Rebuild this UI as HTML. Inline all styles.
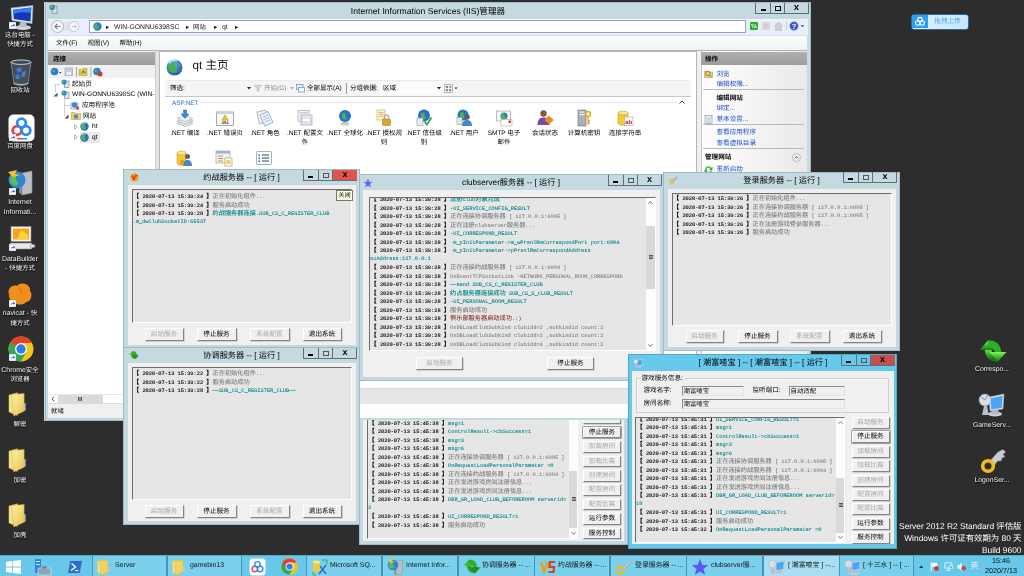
<!DOCTYPE html>
<html lang="zh"><head><meta charset="utf-8"><title>desktop</title>
<style>
*{box-sizing:border-box;margin:0;padding:0}
html,body{width:1024px;height:576px;overflow:hidden;background:#2d2d2d}
body{position:relative;-webkit-font-smoothing:antialiased;text-rendering:geometricPrecision;font-family:"Liberation Sans","Noto Sans CJK SC",sans-serif;font-size:7px;color:#000}
.abs{position:absolute}
div,span,svg{position:absolute}
span,i,b{position:static}
i,b{font-style:normal;font-weight:normal}
/* desktop icons */
.dlabel{color:#fff;font-size:6.9px;text-align:center;width:60px;line-height:9.2px;text-shadow:0 0 1px #000,0.5px 0.5px 1px #000;white-space:nowrap}
/* windows */
.win{background:#c4d9e0;box-shadow:inset 0 0 0 1px #a3bac3}
.win.act{background:#66c9eb;box-shadow:inset 0 0 0 1px #4fa9cd}
.title{font-size:8.2px;text-align:center;white-space:nowrap;color:#000;line-height:12px}
.cbtns{height:11px;border:1px solid #5f6f78;border-top:none;display:block}
.cbtns>div{top:0;height:10px;border-left:1px solid #5f6f78}
.cbtns>div:first-child{border-left:none}
.client{background:#f0f0f0}
.logbox{background:#e6e6e6;border-top:1px solid #6d6d6d;border-left:1px solid #6d6d6d;border-right:1px solid #fff;border-bottom:1px solid #fff;overflow:hidden}
.ll{font-family:"Liberation Mono","Noto Sans CJK SC",monospace;font-size:5.33px;line-height:8.5px;white-space:nowrap;color:#000;height:8.5px}
.ll i{font-family:"Noto Sans CJK SC",sans-serif;font-size:6.2px}
.ll b{color:#000;-webkit-text-stroke:0.12px #000}
.ll b i{font-weight:900}
.ll .g{color:#7a7a7a;-webkit-text-stroke:0.06px #7a7a7a}
.ll .t{color:#088;-webkit-text-stroke:0.1px #088}
.ll .r{color:#7a1010;}
.btn{background:#f0f0f0;border:1px solid #fff;border-right-color:#858585;border-bottom-color:#858585;font-size:6.6px;text-align:center;white-space:nowrap;color:#000;box-shadow:0.5px 0.5px 0 #b0b0b0}
.btn.dis{color:#a8a8a8}
.sb{background:#fcfcfc}
.sb .thumb{background:#d9d9d9}
.dlabel i,.dlabel.c{font-size:6.4px}
.btn.def{box-shadow:0 0 0 0.6px #707070}

</style></head>
<body>
<div id="root" style="left:0;top:0;width:1024px;height:576px;will-change:transform">
<div id="desktop" style="left:0;top:0;width:1024px;height:576px;background:#2d2d2d"></div>
<svg style="left:8px;top:5px" width="26" height="26" viewBox="0 0 26 26"><ellipse cx="15" cy="22.500" rx="8" ry="2.500" fill="#cfd5db"/><path d="M12 17 L18 17 L19 22 L11 22Z" fill="#b9c0c8"/><path d="M3 3 L25 0.500 L24 18.500 L4 15.500Z" fill="#e3e9f0" stroke="#9aa5b0" stroke-width=".6"/><path d="M5 4.800 L23.300 2.600 L22.500 16.600 L5.800 14Z" fill="#1238b8"/><path d="M5 4.800 L23.300 2.600 L23 8 C16 6.500 10 7 5.400 9.500Z" fill="#2f7ff0"/></svg>
<svg style="left:9px;top:22px" width="7" height="7" viewBox="0 0 6 6"><rect width="6" height="6" fill="#fff" stroke="#9ab" stroke-width=".5"/><path d="M1.3 4.8 C1.5 3 2.6 2.3 3.8 2.3 L3.8 1.2 L5.2 2.8 L3.8 4.3 L3.8 3.3 C2.8 3.3 2 3.6 1.3 4.8Z" fill="#2a5fc0"/></svg>
<div class="dlabel" style="left:-10px;top:31px"><i>这台电脑</i> -<br><i>快捷方式</i></div>
<svg style="left:9px;top:59px" width="24" height="27" viewBox="0 0 24 27"><path d="M2 3 L22 3 L19 25 C15 27 9 27 5 25Z" fill="#5f6f7c" fill-opacity=".5" stroke="#8f9da8" stroke-width=".7"/><ellipse cx="12" cy="3.2" rx="10" ry="2.2" fill="#3d4a56" stroke="#d5dee6" stroke-width=".9"/><path d="M7 10 L12 8 L13 12 L9 14Z M13 13 L17 12 L16 18 L12 18Z M6 16 L10 15 L11 20 L7 20Z" fill="#3f86e8" fill-opacity=".85"/><path d="M5 24 C9 26 15 26 19 24" stroke="#b9c6d0" stroke-width="1" fill="none"/></svg>
<div class="dlabel" style="left:-10px;top:86px"><i>回收站</i></div>
<svg style="left:8px;top:114px" width="27" height="28" viewBox="0 0 27 28"><rect x="0.5" y="0.5" width="26" height="27" rx="5" fill="#fff"/><circle cx="9" cy="16.500" r="4.300" fill="none" stroke="#e8453c" stroke-width="2.800"/><circle cx="18" cy="16.500" r="4.300" fill="none" stroke="#2f8cf0" stroke-width="2.800"/><circle cx="13.500" cy="9" r="4.300" fill="none" stroke="#2f8cf0" stroke-width="2.800"/><rect x="9" y="24" width="5" height="1.500" fill="#e8453c"/><rect x="14" y="24" width="5" height="1.500" fill="#2f8cf0"/></svg>
<svg style="left:9px;top:134px" width="7" height="7" viewBox="0 0 6 6"><rect width="6" height="6" fill="#fff" stroke="#9ab" stroke-width=".5"/><path d="M1.3 4.8 C1.5 3 2.6 2.3 3.8 2.3 L3.8 1.2 L5.2 2.8 L3.8 4.3 L3.8 3.3 C2.8 3.3 2 3.6 1.3 4.8Z" fill="#2a5fc0"/></svg>
<div class="dlabel" style="left:-10px;top:142px"><i>百度网盘</i></div>
<svg style="left:7px;top:169px" width="28" height="28" viewBox="0 0 28 28"><path d="M15 4 L25 2 L25 24 L15 26Z" fill="#b9bec4" stroke="#868d95" stroke-width=".6"/><path d="M12 5 L15 4 L15 26 L12 24Z" fill="#7d848c"/><circle cx="10" cy="11" r="8.5" fill="#2e86d9"/><path d="M4 7 C7 4 10 6 9 9 C8 12 12 12 11 15 C9 18 5 16 3 13Z" fill="#5cc04a"/><path d="M1 3 L10 1 L8 5 L13 6 L6 8Z" fill="#f3c52a"/></svg>
<svg style="left:9px;top:188px" width="7" height="7" viewBox="0 0 6 6"><rect width="6" height="6" fill="#fff" stroke="#9ab" stroke-width=".5"/><path d="M1.3 4.8 C1.5 3 2.6 2.3 3.8 2.3 L3.8 1.2 L5.2 2.8 L3.8 4.3 L3.8 3.3 C2.8 3.3 2 3.6 1.3 4.8Z" fill="#2a5fc0"/></svg>
<div class="dlabel" style="left:-10px;top:198.400px">Internet<br>Informati...</div>
<svg style="left:8px;top:226px" width="28" height="26" viewBox="0 0 28 26"><rect x="3" y="0.5" width="20" height="15" fill="#f4f4f4" stroke="#8a8a8a" stroke-width=".6"/><rect x="5" y="2.5" width="16" height="11" fill="#f7a31c"/><path d="M9 13.5 L13 4 L19 8 L21 13.5Z" fill="#fbd43a"/><rect x="2" y="17" width="22" height="6" rx="1" fill="#e9e9e9" stroke="#8a8a8a" stroke-width=".6"/><rect x="22" y="18.5" width="5" height="3" rx="1.5" fill="#ddd" stroke="#8a8a8a" stroke-width=".5"/></svg>
<svg style="left:9px;top:244px" width="7" height="7" viewBox="0 0 6 6"><rect width="6" height="6" fill="#fff" stroke="#9ab" stroke-width=".5"/><path d="M1.3 4.8 C1.5 3 2.6 2.3 3.8 2.3 L3.8 1.2 L5.2 2.8 L3.8 4.3 L3.8 3.3 C2.8 3.3 2 3.6 1.3 4.8Z" fill="#2a5fc0"/></svg>
<div class="dlabel" style="left:-10px;top:254.500px">DataBuilder<br>- <i>快捷方式</i></div>
<svg style="left:7px;top:282px" width="26" height="24" viewBox="0 0 26 24"><path d="M2 13 C0 7 5 2 10 4 C14 -1 24 2 23 9 C26 12 24 20 19 20 C16 24 7 23 6 19 C3 19 2 16 2 13Z" fill="#f0901c"/><path d="M11 5 C14 7 15 9 14 12" stroke="#c86c0c" stroke-width=".8" fill="none"/></svg>
<svg style="left:9px;top:300px" width="7" height="7" viewBox="0 0 6 6"><rect width="6" height="6" fill="#fff" stroke="#9ab" stroke-width=".5"/><path d="M1.3 4.8 C1.5 3 2.6 2.3 3.8 2.3 L3.8 1.2 L5.2 2.8 L3.8 4.3 L3.8 3.3 C2.8 3.3 2 3.6 1.3 4.8Z" fill="#2a5fc0"/></svg>
<div class="dlabel" style="left:-10px;top:309.400px">navicat - <i>快</i><br><i>捷方式</i></div>
<svg style="left:8px;top:336px" width="26" height="26" viewBox="0 0 26 26"><circle cx="13" cy="13" r="12.5" fill="#f6c51d"/><path d="M13 13 L2.2 6.8 A12.5 12.5 0 0 1 23.8 6.8 L13 6.8Z" fill="#e3412f"/><path d="M13 13 L2.2 6.8 A12.5 12.5 0 0 0 13 25.5 L18.5 16Z" fill="#37a84f"/><path d="M2.2 6.8 A12.5 12.5 0 0 1 23.8 6.8 L13 6.8Z" fill="#e3412f"/><circle cx="13" cy="13" r="6" fill="#fff"/><circle cx="13" cy="13" r="4.7" fill="#2f7de8"/></svg>
<svg style="left:9px;top:354px" width="7" height="7" viewBox="0 0 6 6"><rect width="6" height="6" fill="#fff" stroke="#9ab" stroke-width=".5"/><path d="M1.3 4.8 C1.5 3 2.6 2.3 3.8 2.3 L3.8 1.2 L5.2 2.8 L3.8 4.3 L3.8 3.3 C2.8 3.3 2 3.6 1.3 4.8Z" fill="#2a5fc0"/></svg>
<div class="dlabel" style="left:-10px;top:365.500px">Chrome<i>安全</i><br><i>浏览器</i></div>
<svg style="left:8px;top:392px" width="19" height="25" viewBox="0 0 20 26"><defs><linearGradient id="fg0" x1="0" y1="0" x2="1" y2="1"><stop offset="0" stop-color="#fdf1a8"/><stop offset="1" stop-color="#e9c24f"/></linearGradient></defs><path d="M1 3 L10 0.5 L10 24.5 L1 21 Z" fill="#f7e38c" stroke="#d9b64a" stroke-width=".5"/><path d="M4 2.5 L17 1.5 L17 20 L6 25 Z" fill="url(#fg0)" stroke="#d2ab3e" stroke-width=".5"/><path d="M17 12 L18.5 11.5 L18.5 19 L17 20Z" fill="#c9c9c9"/></svg>
<div class="dlabel" style="left:-10px;top:420px"><i>解密</i></div>
<svg style="left:8px;top:448px" width="19" height="25" viewBox="0 0 20 26"><defs><linearGradient id="fg1" x1="0" y1="0" x2="1" y2="1"><stop offset="0" stop-color="#fdf1a8"/><stop offset="1" stop-color="#e9c24f"/></linearGradient></defs><path d="M1 3 L10 0.5 L10 24.5 L1 21 Z" fill="#f7e38c" stroke="#d9b64a" stroke-width=".5"/><path d="M4 2.5 L17 1.5 L17 20 L6 25 Z" fill="url(#fg1)" stroke="#d2ab3e" stroke-width=".5"/><path d="M17 12 L18.5 11.5 L18.5 19 L17 20Z" fill="#c9c9c9"/></svg>
<div class="dlabel" style="left:-10px;top:476px"><i>加密</i></div>
<svg style="left:8px;top:503px" width="19" height="25" viewBox="0 0 20 26"><defs><linearGradient id="fg2" x1="0" y1="0" x2="1" y2="1"><stop offset="0" stop-color="#fdf1a8"/><stop offset="1" stop-color="#e9c24f"/></linearGradient></defs><path d="M1 3 L10 0.5 L10 24.5 L1 21 Z" fill="#f7e38c" stroke="#d9b64a" stroke-width=".5"/><path d="M4 2.5 L17 1.5 L17 20 L6 25 Z" fill="url(#fg2)" stroke="#d2ab3e" stroke-width=".5"/><path d="M17 12 L18.5 11.5 L18.5 19 L17 20Z" fill="#c9c9c9"/></svg>
<div class="dlabel" style="left:-10px;top:531px"><i>加壳</i></div>
<svg style="left:979px;top:340px" width="28" height="22" viewBox="0 0 28 22"><defs><linearGradient id="gr1" x1="0" y1="0" x2="0" y2="1"><stop offset="0" stop-color="#8cf05a"/><stop offset=".5" stop-color="#3cc02c"/><stop offset="1" stop-color="#157a15"/></linearGradient></defs><path d="M9 8 C9 15 12.500 18.500 19 18.500" stroke="url(#gr1)" stroke-width="6.500" fill="none"/><path d="M0.500 10 L9 0.500 L17.500 10Z" fill="url(#gr1)"/><path d="M19 14 C19 7 15.500 3.500 9 3.500" stroke="#2fae26" stroke-width="6.500" fill="none"/><path d="M10.500 12 L19 21.500 L27.500 12Z" fill="url(#gr1)"/></svg>
<div class="dlabel" style="left:962px;top:365px">Correspo...</div>
<svg style="left:978px;top:391px" width="28" height="27" viewBox="0 0 28 27"><ellipse cx="17" cy="23" rx="7" ry="2.5" fill="#c9cfd6"/><path d="M14 17 L20 17 L21 23 L13 23Z" fill="#b4bbc3"/><path d="M11 6 L26 3 L25 18 L12 20Z" fill="#dbe3ec" stroke="#9aa5b0" stroke-width=".6"/><path d="M12.500 7.200 L24.600 4.800 L23.800 16.800 L13.300 18.400Z" fill="#4aa6f2"/><circle cx="7" cy="9" r="6" fill="#d9dde2" stroke="#9aa0a8" stroke-width=".6"/><path d="M3 6 L7 9 L10 4" stroke="#8a9098" stroke-width="1" fill="none"/><path d="M6 15 L9 15 L11 24 L4 24Z" fill="#b9bfc6"/></svg>
<div class="dlabel" style="left:962px;top:420.500px">GameServ...</div>
<svg style="left:980px;top:449px" width="26" height="25" viewBox="0 0 26 25"><path d="M10 12 L18 3 L23 0.500 L25.500 3 L23 5.500 L25 7.500 L22 9 L21 12 L17.500 12 L14 17Z" fill="#c9cdd1" stroke="#8d9297" stroke-width=".6"/><circle cx="8" cy="17" r="5.300" fill="none" stroke="#f2bd18" stroke-width="3.600"/></svg>
<div class="dlabel" style="left:962px;top:476px">LogonSer...</div>
<div style="left:911.500px;top:15px;width:56px;height:13.500px;border-radius:2px;background:linear-gradient(90deg,#e2f3ff,#c4e6ff);overflow:hidden;box-shadow:0 0 0 0.5px #38a4f8"><div style="left:0;top:0;width:16px;height:13px;background:#2b9ef5"></div><svg style="left:2px;top:1px" width="12" height="11" viewBox="0 0 12 11"><circle cx="3.800" cy="7" r="2.200" fill="none" stroke="#fff" stroke-width="1.100"/><circle cx="8.200" cy="7" r="2.200" fill="none" stroke="#fff" stroke-width="1.100"/><circle cx="6" cy="3.600" r="2.200" fill="none" stroke="#fff" stroke-width="1.100"/></svg><div style="left:16px;top:0;width:40px;height:13px;line-height:13px;font-size:6.6px;color:#4aa8f0;text-align:center">拖拽上传</div></div>
<div style="right:2.500px;top:521px;width:300px;text-align:right;color:#fff;font-size:8.400px;line-height:11.800px;white-space:nowrap">Server 2012 R2 Standard 评估版<br>Windows 许可证有效期为 80 天<br>Build 9600</div>
<div class="win" style="left:44px;top:2px;width:767px;height:419px;border-left:1px solid #c4d9e0">
<svg style="left:4px;top:2px" width="9" height="10" viewBox="0 0 9 10"><rect x="3" y="2" width="5" height="7.500" fill="#d8dde2" stroke="#6b7680" stroke-width=".6"/><circle cx="3.200" cy="3.200" r="2.800" fill="#2f86d8"/><path d="M1 2 C2 1 4 1.500 3.500 3 C3 4.500 1.500 4.500 1 3.500Z" fill="#5cc04a"/><path d="M0 .5 L4 0 L2.500 2Z" fill="#f0c22a"/></svg>
<div class="title" style="left:233px;top:2.500px;width:300px;font-size:8.600px">Internet Information Services (IIS)管理器</div>
<div class="cbtns" style="left:710px;top:0.500px;width:54px"><div style="left:0;width:13.500px"><div style="left:4.500px;top:6px;width:5px;height:2px;border:none;background:#000"></div></div><div style="left:13.500px;width:14px"><div style="left:4px;top:3.500px;width:6px;height:4.500px;border:1.300px solid #000"></div></div><div style="left:27.500px;width:25px;font-size:9.500px;font-weight:bold;line-height:9.500px;text-align:center;font-family:'Liberation Sans',sans-serif">x</div></div>
<div style="left:3px;top:16.500px;width:760px;height:17.500px;background:#e9eefb;border-top:1px solid #f3f6fd;border-bottom:1px solid #d9deee"></div>
<div style="left:44px;top:18px;width:657px;height:13px;background:#fff;border:1px solid #9aa2b4"></div>
<svg style="left:5px;top:17px" width="30" height="15" viewBox="0 0 30 15"><rect x="6" y="3" width="18" height="9" fill="#dfe4ee"/><circle cx="7.500" cy="7.500" r="6" fill="#f4f6fa" stroke="#a3abba" stroke-width=".8"/><path d="M10.500 7.500 L5 7.500 M7.300 5 L4.800 7.500 L7.300 10" stroke="#7a8292" stroke-width="1.100" fill="none"/><circle cx="24" cy="7.500" r="5" fill="#f4f6fa" stroke="#b9c0cc" stroke-width=".8"/><path d="M21.500 7.500 L26.500 7.500 M24.500 5.500 L26.500 7.500 L24.500 9.500" stroke="#c3c8d2" stroke-width="1" fill="none"/></svg>
<svg style="left:48px;top:20px" width="9" height="9" viewBox="0 0 9 9"><circle cx="4.500" cy="4.500" r="4.200" fill="#2c7fd6"/><path d="M1.500 2.500 C3 1 5 2 4.500 3.500 C4 5 6 5 5.500 6.500 C4.500 8 2 7 1 5.500Z" fill="#4fb848"/></svg>
<div style="left:61px;top:18.600px;height:13px;line-height:13px;font-size:6.500px;white-space:nowrap;color:#1a1a1a">▸</div>
<div style="left:69px;top:18.600px;height:13px;line-height:13px;font-size:6.800px;white-space:nowrap;color:#1a1a1a">WIN-GONNU6398SC</div>
<div style="left:141px;top:18.600px;height:13px;line-height:13px;font-size:6.500px;white-space:nowrap;color:#1a1a1a">▸</div>
<div style="left:148px;top:18.600px;height:13px;line-height:13px;font-size:6.400px;white-space:nowrap;color:#1a1a1a">网站</div>
<div style="left:169px;top:18.600px;height:13px;line-height:13px;font-size:6.500px;white-space:nowrap;color:#1a1a1a">▸</div>
<div style="left:177px;top:18.600px;height:13px;line-height:13px;font-size:6.800px;white-space:nowrap;color:#1a1a1a">qt</div>
<div style="left:190px;top:18.600px;height:13px;line-height:13px;font-size:6.500px;white-space:nowrap;color:#1a1a1a">▸</div>
<svg style="left:705px;top:19.500px" width="8" height="8" viewBox="0 0 8 8"><rect width="8" height="8" rx="1" fill="#2faa32"/><path d="M1.500 3 L6 3 M2.500 1.800 L1.300 3 L2.500 4.200 M6.500 5 L2 5 M5.500 3.800 L6.700 5 L5.500 6.200" stroke="#eaffea" stroke-width=".8" fill="none"/></svg>
<svg style="left:717px;top:19.500px" width="8" height="8" viewBox="0 0 8 8"><rect width="8" height="8" rx="1" fill="#d6d8dc"/><path d="M2 2 L6 6 M6 2 L2 6" stroke="#c2c5ca" stroke-width="1"/></svg>
<svg style="left:729px;top:18.500px" width="9" height="10" viewBox="0 0 9 10"><path d="M0.500 5 L4.500 1 L8.500 5 L7.500 5 L7.500 9.500 L1.500 9.500 L1.500 5Z" fill="#cfcfcf" stroke="#b4b4b4" stroke-width=".5"/></svg>
<div style="left:741px;top:19px;width:1px;height:9px;background:#cdd2e0"></div>
<svg style="left:743.500px;top:19px" width="16" height="10" viewBox="0 0 16 10"><circle cx="5" cy="5" r="4.200" fill="#2a55b8" stroke="#8d9ab8" stroke-width=".6"/><text x="5" y="7.800" font-size="7.500" font-weight="bold" fill="#fff" text-anchor="middle" font-family="Liberation Sans, sans-serif">?</text><path d="M12 4.200 L15 4.200 L13.500 6Z" fill="#222"/></svg>
<div style="left:3px;top:34px;width:759px;height:15px;background:linear-gradient(#fbfcfd,#f0f2f5);border-bottom:1px solid #aeb4be"></div>
<div style="left:11px;top:35.300px;height:14px;line-height:14px;font-size:6.500px;white-space:nowrap;word-spacing:8.500px">文件(F) 视图(V) 帮助(H)</div>
<div style="left:3px;top:49px;width:759px;height:363px;background:#f0f0f0"></div>
<div style="left:3px;top:49.500px;width:107px;height:13.500px;background:linear-gradient(#b0b0b0,#9c9c9c)"></div>
<div style="left:8px;top:50.500px;height:13px;line-height:13px;font-size:6.600px;font-weight:bold">连接</div>
<div style="left:3px;top:63px;width:107px;height:14px;background:#f1f1f1;border-bottom:1px solid #d5d5d5"></div>
<svg style="left:5px;top:65px" width="56" height="10" viewBox="0 0 56 10"><circle cx="4.500" cy="4.500" r="3.800" fill="#2c7fd6"/><path d="M2 3 C3 2 5 2.500 4.500 4 C4 5.500 2.500 5.500 2 4.500Z" fill="#4fb848"/><path d="M9 5 L11.500 5 L10.200 6.500Z" fill="#333"/><rect x="15" y="1" width="7.500" height="7.500" fill="#c9ced6" stroke="#98a0ac" stroke-width=".6"/><rect x="16.500" y="5" width="4.500" height="3" fill="#eef0f4"/><rect x="26" y="0" width=".8" height="10" fill="#9a9a9a"/><path d="M29 2.500 L32 2.500 L33 1.500 L37 1.500 L37 8.500 L29 8.500Z" fill="#e9c84a" stroke="#b3932a" stroke-width=".5"/><path d="M31.500 6.500 L33.500 4 L35.500 6.500" stroke="#2f9a3a" stroke-width="1.200" fill="none"/><rect x="40.500" y="0" width=".8" height="10" fill="#9a9a9a"/><circle cx="47" cy="4.500" r="3.800" fill="#2c7fd6"/><path d="M44.500 3 C45.500 2 47.500 2.500 47 4 C46.500 5.500 45 5.500 44.500 4.500Z" fill="#4fb848"/><circle cx="50" cy="7" r="2.500" fill="#d8392b"/></svg>
<div style="left:3px;top:76px;width:107px;height:316px;background:#fff"></div>
<div style="left:10px;top:81.7px;width:6px;height:1px;background:#cfcfcf"></div><div style="left:10px;top:81.7px;width:1px;height:8px;background:#cfcfcf"></div>
<svg style="left:16px;top:77.2px" width="9" height="9" viewBox="0 0 9 9"><rect x="3.500" y="2" width="4.500" height="6.500" fill="#dfe3e8" stroke="#6b7680" stroke-width=".6"/><circle cx="3" cy="3" r="2.600" fill="#2f86d8"/><path d="M1 2 C2 1 4 1.500 3.500 3 C3 4 1.500 4 1 3.200Z" fill="#5cc04a"/></svg>
<div style="left:27px;top:77.5px;font-size:6.600px;line-height:10px;white-space:nowrap;">起始页</div>
<svg style="left:8px;top:90.4px" width="5" height="5" viewBox="0 0 5 5"><path d="M4.500 0.500 L4.500 4.500 L0.500 4.500Z" fill="#555"/></svg>
<svg style="left:16px;top:87.9px" width="9" height="9" viewBox="0 0 9 9"><rect x="3.500" y="2" width="4.500" height="6.500" fill="#dfe3e8" stroke="#6b7680" stroke-width=".6"/><circle cx="3" cy="3" r="2.600" fill="#2f86d8"/><path d="M1 2 C2 1 4 1.500 3.500 3 C3 4 1.500 4 1 3.200Z" fill="#5cc04a"/></svg>
<div style="left:27px;top:88.2px;font-size:6.600px;line-height:10px;white-space:nowrap;width:83px;overflow:hidden">WIN-GONNU6398SC (WIN-</div>
<div style="left:19px;top:96.4px;width:1px;height:18px;background:#cfcfcf"></div><div style="left:19px;top:103.1px;width:6px;height:1px;background:#cfcfcf"></div>
<svg style="left:25px;top:98.6px" width="10" height="9" viewBox="0 0 10 9"><rect x="1" y="2" width="7" height="6" fill="#e8ebee" stroke="#8b949e" stroke-width=".6"/><circle cx="4.500" cy="4" r="2.800" fill="#3a8be0"/><circle cx="7.500" cy="7" r="1.800" fill="#d84a3a"/></svg>
<div style="left:37px;top:98.9px;font-size:6.600px;line-height:10px;white-space:nowrap;">应用程序池</div>
<svg style="left:19px;top:111.8px" width="5" height="5" viewBox="0 0 5 5"><path d="M4.500 0.500 L4.500 4.500 L0.500 4.500Z" fill="#555"/></svg>
<svg style="left:26px;top:109.3px" width="10" height="9" viewBox="0 0 10 9"><path d="M0.500 1.500 L4 1.500 L5 2.500 L9.500 2.500 L9.500 8.500 L0.500 8.500Z" fill="#f0d264" stroke="#b3932a" stroke-width=".5"/><circle cx="5" cy="5.500" r="2.200" fill="#3a8be0"/></svg>
<div style="left:38px;top:109.6px;font-size:6.600px;line-height:10px;white-space:nowrap;">网站</div>
<svg style="left:29px;top:121.5px" width="4" height="6" viewBox="0 0 4 6"><path d="M0.700 0.700 L3.300 3 L0.700 5.300Z" fill="#fff" stroke="#777" stroke-width=".6"/></svg>
<svg style="left:35px;top:120.0px" width="9" height="9" viewBox="0 0 9 9"><circle cx="4.500" cy="4.500" r="4.200" fill="#2c6fc4"/><path d="M1.500 2.500 C3 1 5.500 2 4.800 3.500 C4 5 6.500 5 5.500 6.800 C4.500 8 2 7 1 5.500Z" fill="#4fb848"/><path d="M2 2 A3.500 3.500 0 0 1 6 1.200" stroke="#bfe0ff" stroke-width=".8" fill="none"/></svg>
<div style="left:47px;top:120.3px;font-size:6.600px;line-height:10px;white-space:nowrap;">ht</div>
<div style="left:34.500px;top:129.7px;width:20px;height:11px;background:#e9e9e9;border-radius:1px"></div>
<svg style="left:29px;top:132.2px" width="4" height="6" viewBox="0 0 4 6"><path d="M0.700 0.700 L3.300 3 L0.700 5.300Z" fill="#fff" stroke="#777" stroke-width=".6"/></svg>
<svg style="left:35px;top:130.7px" width="9" height="9" viewBox="0 0 9 9"><circle cx="4.500" cy="4.500" r="4.200" fill="#2c6fc4"/><path d="M1.500 2.500 C3 1 5.500 2 4.800 3.500 C4 5 6.500 5 5.500 6.800 C4.500 8 2 7 1 5.500Z" fill="#4fb848"/><path d="M2 2 A3.500 3.500 0 0 1 6 1.200" stroke="#bfe0ff" stroke-width=".8" fill="none"/></svg>
<div style="left:47px;top:131.0px;font-size:6.600px;line-height:10px;white-space:nowrap;">qt</div>
<div style="left:3px;top:392px;width:107px;height:9px;background:#fff;border-top:1px solid #e6e6e6"></div>
<div style="left:13px;top:392.500px;width:45px;height:8.500px;background:#dadada"></div>
<svg style="left:6px;top:394px" width="4" height="6" viewBox="0 0 4 6"><path d="M3.300 0.700 L0.900 3 L3.300 5.300" stroke="#444" stroke-width=".9" fill="none"/></svg>
<div style="left:33px;top:395px;width:1px;height:4px;background:#555;box-shadow:1.500px 0 0 #555,3px 0 0 #555"></div>
<div style="left:3px;top:401px;width:759px;height:14.500px;background:#f0f0f0;border-top:1px solid #dcdcdc"></div>
<div style="left:6px;top:404px;font-size:6.400px;line-height:12px">就绪</div>
<div style="left:110px;top:49px;width:4px;height:343px;background:#e4e4e4;border-left:1px solid #cfcfcf"></div>
<div style="left:114px;top:49px;width:538px;height:352px;background:#fff;border:1px solid #b5b5b5"></div>
<svg style="left:121px;top:56.500px" width="17" height="17" viewBox="0 0 17 17"><defs><radialGradient id="gl" cx=".4" cy=".3" r=".8"><stop offset="0" stop-color="#6fb6f5"/><stop offset="1" stop-color="#1b4fa0"/></radialGradient></defs><circle cx="8.500" cy="8.500" r="8" fill="url(#gl)"/><path d="M3 5 C6 2 10 3 9 6 C8 9 12 9 11 12 C9 15 5 14 3 11 C2 9 2 7 3 5Z" fill="#49b044"/><path d="M11 3 C13 4 14.500 6 14 8 C12.500 7 11.500 5 11 3Z" fill="#49b044"/><path d="M3 4.500 A7 7 0 0 1 11 1.800" stroke="#cfe8ff" stroke-width="1.200" fill="none"/></svg>
<div style="left:147.500px;top:56px;font-size:11.600px;line-height:16px;white-space:nowrap;color:#111">qt 主页</div>
<div style="left:120px;top:78px;width:526px;height:17px;background:#f5f5f5;border-bottom:1px solid #c8c8c8;border-top:1px solid #ebebeb"></div>
<div style="left:125px;top:79px;font-size:6.500px;line-height:15px;white-space:nowrap">筛选:</div>
<svg style="left:202px;top:85px" width="4" height="3" viewBox="0 0 4 3"><path d="M0 0 L4 0 L2 2.500Z" fill="#222"/></svg>
<svg style="left:209px;top:83px" width="8" height="7" viewBox="0 0 8 7"><path d="M0.500 0.500 L7.500 0.500 L4.800 3.500 L4.800 6.500 L3.200 5.500 L3.200 3.500Z" fill="#d5d8dc" stroke="#a5a9ae" stroke-width=".5"/></svg>
<div style="left:219px;top:79px;font-size:6.500px;line-height:15px;white-space:nowrap;color:#8a8a8a">开始(G)</div>
<svg style="left:245px;top:85px" width="4" height="3" viewBox="0 0 4 3"><path d="M0 0 L4 0 L2 2.500Z" fill="#aaa"/></svg>
<svg style="left:251px;top:82px" width="9" height="9" viewBox="0 0 9 9"><rect x="0.500" y="0.500" width="6.500" height="5" fill="#eaf2fb" stroke="#5d8cc4" stroke-width=".7"/><rect x="2.500" y="3.500" width="6" height="4.500" fill="#fff" stroke="#5d8cc4" stroke-width=".7"/></svg>
<div style="left:262px;top:79px;font-size:6.500px;line-height:15px;white-space:nowrap">全部显示(A)</div>
<div style="left:301px;top:81px;width:1px;height:11px;background:#9a9a9a"></div>
<div style="left:305px;top:79px;font-size:6.500px;line-height:15px;white-space:nowrap">分组依据:</div>
<div style="left:335px;top:80px;width:64px;height:13px;background:#fbfbfb"></div>
<div style="left:338px;top:79px;font-size:6.500px;line-height:15px;white-space:nowrap">区域</div>
<svg style="left:392px;top:85px" width="4" height="3" viewBox="0 0 4 3"><path d="M0 0 L4 0 L2 2.500Z" fill="#222"/></svg>
<svg style="left:399px;top:82px" width="14" height="9" viewBox="0 0 14 9"><rect x="0.500" y="0.500" width="8" height="8" fill="#f4f4f4" stroke="#8e959e" stroke-width=".6"/><rect x="1.800" y="1.800" width="2.200" height="2.200" fill="#6d8fbd"/><rect x="5" y="1.800" width="2.200" height="2.200" fill="#c4a25a"/><rect x="1.800" y="5" width="2.200" height="2.200" fill="#79a96a"/><rect x="5" y="5" width="2.200" height="2.200" fill="#6d8fbd"/><path d="M10.500 3.500 L13.500 3.500 L12 5.300Z" fill="#222"/></svg>
<div style="left:127px;top:95.700px;font-size:6.400px;line-height:11px;color:#2a6fc9;white-space:nowrap">ASP.NET</div>
<div style="left:156px;top:100px;width:476px;height:1px;background:#dfe6f1"></div>
<svg style="left:634px;top:98px" width="6" height="4" viewBox="0 0 6 4"><path d="M0.500 3.500 L3 1 L5.500 3.500" stroke="#333" stroke-width=".9" fill="none"/></svg>
<svg style="left:131.0px;top:106.5px" width="18" height="18" viewBox="0 0 18 18"><path d="M1 14.500 L9 11.500 L17 14.500 L9 17.500Z" fill="#e3e6ea" stroke="#9aa1a9" stroke-width=".6"/><path d="M1 12 L9 9 L17 12 L9 15Z" fill="#eceef1" stroke="#9aa1a9" stroke-width=".6"/><path d="M1 9.500 L9 6.500 L17 9.500 L9 12.500Z" fill="#f7f8f9" stroke="#9aa1a9" stroke-width=".6"/><path d="M7.500 1 L10.500 1 L10.500 5 L13 5 L9 9.500 L5 5 L7.500 5Z" fill="#2f8be6" stroke="#1b5fae" stroke-width=".5"/></svg>
<div style="left:110px;top:127px;width:60px;text-align:center;font-size:6.500px;line-height:9px;white-space:nowrap">.NET 编译</div>
<svg style="left:171.0px;top:106.5px" width="18" height="18" viewBox="0 0 18 18"><rect x="0.500" y="3" width="17" height="13.500" fill="#fbfbfb" stroke="#7d858d" stroke-width=".7"/><rect x="0.500" y="3" width="17" height="2" fill="#c9d3df"/><path d="M9 5.800 L12.300 11.300 L5.700 11.300Z" fill="#f5c518" stroke="#a8850c" stroke-width=".4"/><text x="9" y="15.300" font-size="4.200" font-weight="bold" fill="#333" text-anchor="middle" font-family="Liberation Sans, sans-serif">404</text></svg>
<div style="left:150px;top:127px;width:60px;text-align:center;font-size:6.500px;line-height:9px;white-space:nowrap">.NET 错误页</div>
<svg style="left:211.0px;top:106.5px" width="18" height="18" viewBox="0 0 18 18"><rect x="2" y="2" width="9" height="12" fill="#eef1f5" stroke="#8c95a0" stroke-width=".6" transform="rotate(-12 6 8)"/><rect x="6" y="4" width="9" height="12" fill="#e6eef9" stroke="#7f95b5" stroke-width=".6" transform="rotate(-25 10 10)"/><path d="M7 8 L12 6 M8 10.500 L13 8.500 M9 13 L14 11" stroke="#8fa8cc" stroke-width=".7"/></svg>
<div style="left:190px;top:127px;width:60px;text-align:center;font-size:6.500px;line-height:9px;white-space:nowrap">.NET 角色</div>
<svg style="left:251.0px;top:106.5px" width="18" height="18" viewBox="0 0 18 18"><rect x="2" y="1.500" width="11" height="11" fill="#f2f3f5" stroke="#9aa1a9" stroke-width=".6"/><rect x="5" y="6" width="11" height="10" fill="#e9ecf0" stroke="#8f979f" stroke-width=".6"/><rect x="6.500" y="9" width="8" height="4" fill="#fff" stroke="#9fb0c8" stroke-width=".5"/><rect x="3.500" y="3" width="8" height="1.500" fill="#c6ccd4"/></svg>
<div style="left:230px;top:127px;width:60px;text-align:center;font-size:6.500px;line-height:9px;white-space:nowrap">.NET 配置文<br>件</div>
<svg style="left:291.0px;top:106.5px" width="18" height="18" viewBox="0 0 18 18"><circle cx="9" cy="7" r="6" fill="#2a72cc"/><path d="M9 7 m-3 -2 c2 -2 4 -1 3.500 1 c-.5 2 2 2 1.500 3.500 c-1.500 2 -4 1 -5 -1z" fill="#4db548"/><path d="M5 15 L13 15 L11.500 13 L6.500 13Z" fill="#b7bdc4"/><ellipse cx="9" cy="15.500" rx="5" ry="1.300" fill="#d0d5da"/></svg>
<div style="left:270px;top:127px;width:60px;text-align:center;font-size:6.500px;line-height:9px;white-space:nowrap">.NET 全球化</div>
<svg style="left:330.0px;top:106.5px" width="18" height="18" viewBox="0 0 18 18"><rect x="2" y="1" width="8" height="10" fill="#fbf3d0" stroke="#c0a85a" stroke-width=".6"/><path d="M3.500 3.500 L8.500 3.500 M3.500 5.500 L8.500 5.500 M3.500 7.500 L8.500 7.500" stroke="#bfa64f" stroke-width=".7"/><rect x="7.500" y="10" width="8" height="6.500" rx="1" fill="#d9a52a" stroke="#9b7313" stroke-width=".5"/><path d="M9.300 10 L9.300 8 A2.200 2.200 0 0 1 13.700 8 L13.700 10" stroke="#a9a9a9" stroke-width="1.200" fill="none"/></svg>
<div style="left:309px;top:127px;width:60px;text-align:center;font-size:6.500px;line-height:9px;white-space:nowrap">.NET 授权规<br>则</div>
<svg style="left:370.0px;top:106.5px" width="18" height="18" viewBox="0 0 18 18"><circle cx="9" cy="6.5" r="6" fill="#2a72cc"/><path d="M9 6.5 m-3 -2 c2 -2 4 -1 3.500 1 c-.5 2 2 2 1.500 3.500 c-1.500 2 -4 1 -5 -1z" fill="#4db548"/><rect x="2" y="9" width="6" height="7.500" fill="#e8ecf1" stroke="#8c95a0" stroke-width=".6"/><path d="M9.500 12.500 L12 15.500 L16.500 8.500" stroke="#2fa836" stroke-width="1.800" fill="none"/></svg>
<div style="left:349px;top:127px;width:60px;text-align:center;font-size:6.500px;line-height:9px;white-space:nowrap">.NET 信任级<br>别</div>
<svg style="left:410.0px;top:106.5px" width="18" height="18" viewBox="0 0 18 18"><circle cx="8" cy="6" r="5.5" fill="#2a72cc"/><path d="M8 6 m-3 -2 c2 -2 4 -1 3.500 1 c-.5 2 2 2 1.500 3.500 c-1.500 2 -4 1 -5 -1z" fill="#4db548"/><rect x="2" y="8.500" width="5" height="7" fill="#e8ecf1" stroke="#8c95a0" stroke-width=".6"/><circle cx="12" cy="8" r="2.800" fill="#5a5f66"/><path d="M7 17 C7 12.500 9.500 11 12 11 C14.500 11 17 12.500 17 17Z" fill="#4a85c8"/></svg>
<div style="left:389px;top:127px;width:60px;text-align:center;font-size:6.500px;line-height:9px;white-space:nowrap">.NET 用户</div>
<svg style="left:450.0px;top:106.5px" width="18" height="18" viewBox="0 0 18 18"><rect x="1.500" y="2" width="14" height="10" fill="#f4f5f7" stroke="#8f979f" stroke-width=".6"/><circle cx="9" cy="7" r="3.5" fill="#2a72cc"/><path d="M9 7 m-3 -2 c2 -2 4 -1 3.500 1 c-.5 2 2 2 1.500 3.500 c-1.500 2 -4 1 -5 -1z" fill="#4db548"/><rect x="6" y="10.500" width="11" height="6.500" fill="#fff" stroke="#a0a7ae" stroke-width=".6"/><rect x="13.500" y="11.500" width="2.500" height="2.500" fill="#d8392b"/></svg>
<div style="left:429px;top:127px;width:60px;text-align:center;font-size:6.500px;line-height:9px;white-space:nowrap">SMTP 电子<br>邮件</div>
<svg style="left:491.0px;top:106.5px" width="18" height="18" viewBox="0 0 18 18"><circle cx="7.500" cy="4.500" r="3.200" fill="#8a5a3a"/><path d="M1.500 16 C1.500 10 4.500 8.500 7.500 8.500 C10.500 8.500 13.500 10 13.500 16Z" fill="#7a4aa8"/><path d="M12.500 7 L17.500 11 L12.500 15 L8.500 11Z" fill="#f08a1c" stroke="#c46708" stroke-width=".5"/></svg>
<div style="left:470px;top:127px;width:60px;text-align:center;font-size:6.500px;line-height:9px;white-space:nowrap">会话状态</div>
<svg style="left:530.0px;top:106.5px" width="18" height="18" viewBox="0 0 18 18"><rect x="3" y="1" width="8" height="16" fill="#a9b0b8" stroke="#6d747c" stroke-width=".6"/><rect x="4.500" y="2.500" width="5" height="1.200" fill="#e9ecef"/><rect x="4.500" y="5" width="5" height="1.200" fill="#e9ecef"/><circle cx="13" cy="5" r="2.500" fill="none" stroke="#e7a81c" stroke-width="1.500"/><path d="M13 7.500 L13 15 M13 12 L15 12 M13 14.500 L15 14.500" stroke="#e7a81c" stroke-width="1.400"/></svg>
<div style="left:509px;top:127px;width:60px;text-align:center;font-size:6.500px;line-height:9px;white-space:nowrap">计算机密钥</div>
<svg style="left:571.0px;top:106.5px" width="18" height="18" viewBox="0 0 18 18"><path d="M2 4 L2 14 C2 17 12 17 12 14 L12 4Z" fill="#f3c93a" stroke="#b8901a" stroke-width=".5"/><ellipse cx="7" cy="4" rx="5" ry="2" fill="#fbe58a" stroke="#b8901a" stroke-width=".5"/><rect x="8.500" y="8" width="8.500" height="8.500" fill="#fff" stroke="#9aa1a9" stroke-width=".6"/><text x="12.700" y="14.500" font-size="6" font-weight="bold" fill="#c22" text-anchor="middle" font-family="Liberation Sans, sans-serif">ab</text></svg>
<div style="left:550px;top:127px;width:60px;text-align:center;font-size:6.500px;line-height:9px;white-space:nowrap">连接字符串</div>
<svg style="left:129.5px;top:147.0px" width="18" height="18" viewBox="0 0 18 18"><path d="M2 4 L2 14 C2 17 11 17 11 14 L11 4Z" fill="#f3c93a" stroke="#b8901a" stroke-width=".5"/><ellipse cx="6.500" cy="4" rx="4.500" ry="2" fill="#fbe58a" stroke="#b8901a" stroke-width=".5"/><circle cx="12.500" cy="7.500" r="2.500" fill="#5a5f66"/><path d="M8 17 C8 12 10.500 11 12.500 11 C14.500 11 17 12 17 17Z" fill="#4a85c8"/><rect x="5" y="11" width="4" height="5" fill="#d9a52a"/></svg>
<svg style="left:169.5px;top:147.0px" width="18" height="18" viewBox="0 0 18 18"><rect x="1" y="2" width="14" height="12" fill="#f2f3f6" stroke="#8f979f" stroke-width=".6"/><rect x="1" y="2" width="14" height="2.500" fill="#9fb4d2"/><path d="M3 7 L8 7 M3 9.500 L8 9.500 M3 12 L8 12" stroke="#d8892a" stroke-width="1"/><rect x="10" y="9" width="7" height="8" fill="#fff" stroke="#a38f3a" stroke-width=".6"/><rect x="11.500" y="11" width="4" height="4" fill="#f0d264"/></svg>
<svg style="left:209.5px;top:147.0px" width="18" height="18" viewBox="0 0 18 18"><rect x="1.500" y="2.500" width="15" height="13" rx="1" fill="#fdfdfe" stroke="#7d8fa8" stroke-width=".7"/><path d="M7 6 L14 6 M7 9 L14 9 M7 12 L14 12" stroke="#39424e" stroke-width="1"/><path d="M3.500 5.500 L5 7 M3.500 8.500 L5 10 M3.500 11.500 L5 13" stroke="#2d79d8" stroke-width="1.200"/></svg>
<div style="left:656px;top:49px;width:106px;height:352px;background:linear-gradient(90deg,#fff,#e9e9e9);border-left:1px solid #c5c5c5"></div>
<div style="left:656px;top:49.500px;width:106px;height:13.500px;background:linear-gradient(#b0b0b0,#9c9c9c)"></div>
<div style="left:660px;top:50.500px;height:13px;line-height:13px;font-size:6.600px;font-weight:bold">操作</div>
<svg style="left:659px;top:67px" width="9" height="9" viewBox="0 0 9 9"><path d="M0.500 2 L3.500 2 L4.500 3 L8.500 3 L8.500 8.500 L0.500 8.500Z" fill="#f0d264" stroke="#b3932a" stroke-width=".5"/><circle cx="4" cy="4.500" r="2.200" fill="none" stroke="#6d747c" stroke-width=".8"/><path d="M5.500 6 L7.500 8" stroke="#6d747c" stroke-width="1"/></svg>
<div style="left:671.500px;top:67.7px;font-size:6.600px;line-height:10px;white-space:nowrap;color:#1a4fd0">浏览</div>
<div style="left:671.500px;top:78.3px;font-size:6.600px;line-height:10px;white-space:nowrap;color:#1a4fd0">编辑权限...</div>
<div style="left:658px;top:87px;width:101px;height:1px;background:#b9b9b9"></div>
<div style="left:671.500px;top:91.5px;font-size:6.600px;line-height:10px;white-space:nowrap;font-weight:bold;color:#000">编辑网站</div>
<div style="left:671.500px;top:102.3px;font-size:6.600px;line-height:10px;white-space:nowrap;color:#1a4fd0">绑定...</div>
<svg style="left:659px;top:112.500px" width="9" height="9" viewBox="0 0 9 9"><rect x="1" y="0.500" width="7" height="8" fill="#f1f3f6" stroke="#7f8994" stroke-width=".6"/><path d="M2.500 3 L6.500 3 M2.500 5 L6.500 5 M2.500 7 L6.500 7" stroke="#8fa6c4" stroke-width=".7"/></svg>
<div style="left:671.500px;top:112.9px;font-size:6.600px;line-height:10px;white-space:nowrap;color:#1a4fd0">基本设置...</div>
<div style="left:658px;top:122px;width:101px;height:1px;background:#b9b9b9"></div>
<div style="left:671.500px;top:126.0px;font-size:6.600px;line-height:10px;white-space:nowrap;color:#1a4fd0">查看应用程序</div>
<div style="left:671.500px;top:136.5px;font-size:6.600px;line-height:10px;white-space:nowrap;color:#1a4fd0">查看虚拟目录</div>
<div style="left:658px;top:146px;width:101px;height:1px;background:#b9b9b9"></div>
<div style="left:660px;top:150.500px;font-size:6.600px;line-height:10px;white-space:nowrap;font-weight:bold">管理网站</div>
<svg style="left:746.500px;top:151px" width="9" height="9" viewBox="0 0 9 9"><circle cx="4.500" cy="4.500" r="4" fill="#f3f3f3" stroke="#9a9a9a" stroke-width=".6"/><path d="M2.800 5.300 L4.500 3.600 L6.200 5.300" stroke="#444" stroke-width=".9" fill="none"/></svg>
<svg style="left:659px;top:163px" width="9" height="9" viewBox="0 0 9 9"><path d="M1 4 A3.500 3.500 0 0 1 7.500 3 L8.500 1.500 L8.500 5 L5 5 L6.300 3.800 A2 2 0 0 0 2.500 4Z" fill="#34a83c"/><path d="M8 5.500 A3.500 3.500 0 0 1 1.500 6.500 L0.500 8 L0.500 4.500 L4 4.500 L2.700 5.700 A2 2 0 0 0 6.500 5.500Z" fill="#34a83c"/></svg>
<div style="left:671.500px;top:163.2px;font-size:6.600px;line-height:10px;white-space:nowrap;color:#1a4fd0">重新启动</div>
</div>
<div class="win" style="left:123px;top:169px;width:237px;height:180px">
<svg style="left:7px;top:4px" width="9" height="9" viewBox="0 0 9 9"><circle cx="4.500" cy="4.500" r="4" fill="#f0a020"/><path d="M2 2.500 L4 6.500 L5.500 2.500" stroke="#c8321a" stroke-width="1.300" fill="none"/><path d="M5 1 L8 2.500 L6 4Z" fill="#d84a1c"/></svg>
<div class="title" style="left:0;top:3px;width:237px">约战服务器 -- [ 运行 ]</div>
<div class="cbtns" style="left:180px;top:0.500px;width:54px"><div style="left:0;width:14px"><div style="left:4px;top:6px;width:5px;height:2px;border:none;background:#000"></div></div><div style="left:14px;width:14px"><div style="left:4px;top:3px;width:6px;height:5px;border:1px solid #555;border-top-width:1.300px"></div></div><div style="left:28px;width:25px;background:#e15350;font-size:9px;font-weight:bold;line-height:8.500px;text-align:center;font-family:'Liberation Sans',sans-serif">x</div></div>
<div class="client" style="left:4.500px;top:16px;width:228.5px;height:160px">
<div class="logbox" style="left:4px;top:4px;width:220px;height:134px">
<div class="ll" style="top:2.0px;left:0.5px"><b><i>【</i> 2020-07-13 15:39:24 <i>】</i></b><span class="g"><i>正在初始化组件</i>...</span></div>
<div class="ll" style="top:10.5px;left:0.5px"><b><i>【</i> 2020-07-13 15:39:24 <i>】</i></b><span class="g"><i>服务启动成功</i></span></div>
<div class="ll" style="top:19.0px;left:0.5px"><b><i>【</i> 2020-07-13 15:39:28 <i>】</i></b><span class="t"><i>约战服务器连接</i>.SUB_CS_C_REGISTER_CLUB</span></div>
<div class="ll" style="top:27.5px;left:0.0px"><span class="t">.m_dwClubSocketID:65537</span></div>
</div>
<div class="btn dis " style="left:17px;top:142.8px;width:39px;height:13px;line-height:11px">启动服务</div>
<div class="btn " style="left:69px;top:142.8px;width:40px;height:13px;line-height:11px">停止服务</div>
<div class="btn dis " style="left:122px;top:142.8px;width:40px;height:13px;line-height:11px">系统配置</div>
<div class="btn " style="left:175px;top:142.8px;width:39px;height:13px;line-height:11px">退出系统</div>
</div></div>
<div style="left:336px;top:190px;width:17px;height:11px;background:#ffffe1;border:1px solid #767676;font-size:6.200px;line-height:9px;text-align:center;white-space:nowrap">关闭</div>
<div class="win" style="left:123px;top:347px;width:237px;height:178px">
<svg style="left:5.500px;top:4px" width="10" height="8" viewBox="0 0 28 22"><path d="M9 8 C9 15 12.500 18.500 19 18.500" stroke="#2aa32a" stroke-width="7" fill="none"/><path d="M0.500 10 L9 0.500 L17.500 10Z" fill="#3cc02c"/><path d="M19 14 C19 7 15.500 3.500 9 3.500" stroke="#2fae26" stroke-width="7" fill="none"/><path d="M10.500 12 L19 21.500 L27.500 12Z" fill="#1f8f1f"/></svg>
<div class="title" style="left:0;top:3px;width:237px">协调服务器 -- [ 运行 ]</div>
<div class="cbtns" style="left:180px;top:0.500px;width:54px"><div style="left:0;width:14px"><div style="left:4px;top:6px;width:5px;height:2px;border:none;background:#000"></div></div><div style="left:14px;width:14px"><div style="left:4px;top:3px;width:6px;height:5px;border:1px solid #555;border-top-width:1.300px"></div></div><div style="left:28px;width:25px;font-size:9px;font-weight:bold;line-height:8.500px;text-align:center;font-family:'Liberation Sans',sans-serif">x</div></div>
<div class="client" style="left:4.500px;top:16px;width:228.5px;height:158px">
<div class="logbox" style="left:4px;top:4px;width:220px;height:133px">
<div class="ll" style="top:1.3px;left:0.5px"><b><i>【</i> 2020-07-13 15:39:22 <i>】</i></b><span class="g"><i>正在初始化组件</i>...</span></div>
<div class="ll" style="top:9.8px;left:0.5px"><b><i>【</i> 2020-07-13 15:39:22 <i>】</i></b><span class="g"><i>服务启动成功</i></span></div>
<div class="ll" style="top:18.3px;left:0.5px"><b><i>【</i> 2020-07-13 15:39:28 <i>】</i></b><span class="t">——SUB_CS_C_REGISTER_CLUB——</span></div>
</div>
<div class="btn dis " style="left:17px;top:141.8px;width:39px;height:13px;line-height:11px">启动服务</div>
<div class="btn " style="left:69px;top:141.8px;width:40px;height:13px;line-height:11px">停止服务</div>
<div class="btn dis " style="left:122px;top:141.8px;width:40px;height:13px;line-height:11px">系统配置</div>
<div class="btn " style="left:175px;top:141.8px;width:39px;height:13px;line-height:11px">退出系统</div>
</div></div>
<div class="win" style="left:663px;top:171.5px;width:237px;height:179px">
<svg style="left:5.500px;top:4px" width="8.500" height="8.500" viewBox="0 0 10 10"><path d="M4.500 5 L8 1.500 L9.500 1 L9.500 2.500 L8.500 3 L8.500 4 L7.500 4 L6 6Z" fill="#b9bdc2" stroke="#8a8f95" stroke-width=".4"/><circle cx="3.200" cy="6.500" r="2" fill="none" stroke="#f0b416" stroke-width="1.400"/></svg>
<div class="title" style="left:0;top:3px;width:237px">登录服务器 -- [ 运行 ]</div>
<div class="cbtns" style="left:180px;top:0.500px;width:54px"><div style="left:0;width:14px"><div style="left:4px;top:6px;width:5px;height:2px;border:none;background:#000"></div></div><div style="left:14px;width:14px"><div style="left:4px;top:3px;width:6px;height:5px;border:1px solid #555;border-top-width:1.300px"></div></div><div style="left:28px;width:25px;font-size:9px;font-weight:bold;line-height:8.500px;text-align:center;font-family:'Liberation Sans',sans-serif">x</div></div>
<div class="client" style="left:4.500px;top:17px;width:228.5px;height:158px">
<div class="logbox" style="left:4px;top:4px;width:220px;height:133px">
<div class="ll" style="top:0.5px;left:0.5px"><b><i>【</i> 2020-07-13 15:39:26 <i>】</i></b><span class="g"><i>正在初始化组件</i>...</span></div>
<div class="ll" style="top:9.0px;left:0.5px"><b><i>【</i> 2020-07-13 15:39:26 <i>】</i></b><span class="g"><i>正在连接协调服务器</i> [ 127.0.0.1:6005 ]</span></div>
<div class="ll" style="top:17.5px;left:0.5px"><b><i>【</i> 2020-07-13 15:39:26 <i>】</i></b><span class="g"><i>正在连接约战服务器</i> [ 127.0.0.1:6005 ]</span></div>
<div class="ll" style="top:26.0px;left:0.5px"><b><i>【</i> 2020-07-13 15:39:26 <i>】</i></b><span class="g"><i>正在注册游戏登录服务器</i>...</span></div>
<div class="ll" style="top:34.5px;left:0.5px"><b><i>【</i> 2020-07-13 15:39:26 <i>】</i></b><span class="g"><i>服务启动成功</i></span></div>
</div>
<div class="btn dis " style="left:18px;top:141.8px;width:38px;height:13px;line-height:11px">启动服务</div>
<div class="btn " style="left:70px;top:141.8px;width:40px;height:13px;line-height:11px">停止服务</div>
<div class="btn dis " style="left:122px;top:141.8px;width:40px;height:13px;line-height:11px">系统配置</div>
<div class="btn " style="left:175px;top:141.8px;width:39px;height:13px;line-height:11px">退出系统</div>
</div></div>
<div class="win" style="left:359px;top:350px;width:269px;height:195px">
<div style="left:1px;top:31px;width:268px;height:8px;background:#fff"></div>
<div style="left:1px;top:38px;width:268px;height:16px;background:#e7e7e7;border-top:1px solid #d9d9d9"></div>
<div style="left:1px;top:54px;width:268px;height:14px;background:#fdfdfd"></div>
<div class="client" style="left:4px;top:70px;width:261px;height:121px;overflow:hidden">
<div class="logbox" style="left:4px;top:0px;width:211px;height:119px;border-top:none">
<div class="ll" style="top:-1.5px;left:0.5px"><b><i>【</i> 2020-07-13 15:45:38 <i>】</i></b><span class="t">msg=1</span></div>
<div class="ll" style="top:7.0px;left:0.5px"><b><i>【</i> 2020-07-13 15:45:38 <i>】</i></b><span class="t">ControlResult-&gt;cbSuccess=1</span></div>
<div class="ll" style="top:15.5px;left:0.5px"><b><i>【</i> 2020-07-13 15:45:38 <i>】</i></b><span class="t">msg=3</span></div>
<div class="ll" style="top:24.0px;left:0.5px"><b><i>【</i> 2020-07-13 15:45:38 <i>】</i></b><span class="t">msg=6</span></div>
<div class="ll" style="top:32.5px;left:0.5px"><b><i>【</i> 2020-07-13 15:45:38 <i>】</i></b><span class="g"><i>正在连接协调服务器</i> [ 127.0.0.1:6005 ]</span></div>
<div class="ll" style="top:41.0px;left:0.5px"><b><i>【</i> 2020-07-13 15:45:38 <i>】</i></b><span class="t">OnRequestLoadPersonalParameter =0</span></div>
<div class="ll" style="top:49.5px;left:0.5px"><b><i>【</i> 2020-07-13 15:45:38 <i>】</i></b><span class="g"><i>正在连接约战服务器</i> [ 127.0.0.1:6004 ]</span></div>
<div class="ll" style="top:58.0px;left:0.5px"><b><i>【</i> 2020-07-13 15:45:38 <i>】</i></b><span class="g"><i>正在发送游戏房间注册信息</i>...</span></div>
<div class="ll" style="top:66.5px;left:0.5px"><b><i>【</i> 2020-07-13 15:45:38 <i>】</i></b><span class="g"><i>正在发送游戏房间注册信息</i>...</span></div>
<div class="ll" style="top:75.0px;left:0.5px"><b><i>【</i> 2020-07-13 15:45:38 <i>】</i></b><span class="t">DBR_GR_LOAD_CLUB_BEFOREROOM serverid=</span></div>
<div class="ll" style="top:83.5px;left:0.0px"><span class="t">3</span></div>
<div class="ll" style="top:92.0px;left:0.5px"><b><i>【</i> 2020-07-13 15:45:38 <i>】</i></b><span class="t">UI_CORRESPOND_RESULT=1</span></div>
<div class="ll" style="top:100.5px;left:0.5px"><b><i>【</i> 2020-07-13 15:45:38 <i>】</i></b><span class="g"><i>服务启动成功</i></span></div>
<div class="sb" style="left:200.5px;top:-10px;width:9px;height:128px"><div class="thumb" style="left:0;top:61px;width:9px;height:57px"></div><svg style="left:2px;top:3px" width="5" height="3" viewBox="0 0 5 3"><path d="M0.500 2.700 L2.500 0.700 L4.500 2.700" stroke="#444" stroke-width=".8" fill="none"/></svg><svg style="left:2px;top:122px" width="5" height="3" viewBox="0 0 5 3"><path d="M0.500 0.300 L2.500 2.300 L4.500 0.300" stroke="#444" stroke-width=".8" fill="none"/></svg><div style="left:3px;top:87px;width:4px;height:1px;background:#555;box-shadow:0 1.500px 0 #555,0 3px 0 #555"></div></div>
</div>
<div class="btn dis " style="left:220px;top:-7.6px;width:38px;height:11.5px;line-height:9.5px">启动服务</div>
<div class="btn def" style="left:220px;top:6.8px;width:38px;height:11.5px;line-height:9.5px">停止服务</div>
<div class="btn dis " style="left:220px;top:21.2px;width:38px;height:11.5px;line-height:9.5px">加载房间</div>
<div class="btn dis " style="left:220px;top:35.6px;width:38px;height:11.5px;line-height:9.5px">加载比赛</div>
<div class="btn dis " style="left:220px;top:50.0px;width:38px;height:11.5px;line-height:9.5px">创建房间</div>
<div class="btn dis " style="left:220px;top:64.4px;width:38px;height:11.5px;line-height:9.5px">配置房间</div>
<div class="btn dis " style="left:220px;top:78.8px;width:38px;height:11.5px;line-height:9.5px">配置比赛</div>
<div class="btn " style="left:220px;top:93.2px;width:38px;height:11.5px;line-height:9.5px">运行参数</div>
<div class="btn " style="left:220px;top:107.6px;width:38px;height:11.5px;line-height:9.5px">服务控制</div>
</div></div>
<div class="win" style="left:358.500px;top:174px;width:305.500px;height:207px">
<svg style="left:4.500px;top:3.500px" width="10" height="10" viewBox="0 0 12 12"><path d="M6 0.500 L7.500 4.500 L11.500 4.800 L8.300 7.300 L9.500 11.300 L6 9 L2.500 11.300 L3.700 7.300 L0.500 4.800 L4.500 4.500Z" fill="#6565f2"/></svg>
<div class="title" style="left:0;top:3px;width:305px">clubserver服务器 -- [ 运行 ]</div>
<div class="cbtns" style="left:249px;top:0.500px;width:54px"><div style="left:0;width:14px"><div style="left:4px;top:6px;width:5px;height:2px;border:none;background:#000"></div></div><div style="left:14px;width:14px"><div style="left:4px;top:3px;width:6px;height:5px;border:1px solid #555;border-top-width:1.300px"></div></div><div style="left:28px;width:25px;font-size:9px;font-weight:bold;line-height:8.500px;text-align:center;font-family:'Liberation Sans',sans-serif">x</div></div>
<div class="client" style="left:4.500px;top:16px;width:297px;height:187px">
<div class="logbox" style="left:6px;top:7px;width:287px;height:154px">
<div class="ll" style="top:-3.0px;left:0.5px"><b><i>【</i> 2020-07-13 15:39:28 <i>】</i></b><span class="t"><i>注册</i>club<i>对象完成</i></span></div>
<div class="ll" style="top:5.5px;left:0.5px"><b><i>【</i> 2020-07-13 15:39:28 <i>】</i></b><span class="t">-UI_SERVICE_CONFIG_RESULT</span></div>
<div class="ll" style="top:14.0px;left:0.5px"><b><i>【</i> 2020-07-13 15:39:28 <i>】</i></b><span class="g"><i>正在连接协调服务器</i> [ 127.0.0.1:6005 ]</span></div>
<div class="ll" style="top:22.5px;left:0.5px"><b><i>【</i> 2020-07-13 15:39:28 <i>】</i></b><span class="g"><i>正在注册</i>clubserver<i>服务器</i>...</span></div>
<div class="ll" style="top:31.0px;left:0.5px"><b><i>【</i> 2020-07-13 15:39:28 <i>】</i></b><span class="t">-UI_CORRESPOND_RESULT</span></div>
<div class="ll" style="top:39.5px;left:0.5px"><b><i>【</i> 2020-07-13 15:39:28 <i>】</i></b><span class="t"> m_pInitParameter-&gt;m_wPrsnlRmCorrespondPort port:6004</span></div>
<div class="ll" style="top:48.0px;left:0.5px"><b><i>【</i> 2020-07-13 15:39:28 <i>】</i></b><span class="t"> m_pInitParameter-&gt;pPrsnlRmCorrespondAddress</span></div>
<div class="ll" style="top:56.5px;left:0.0px"><span class="t">szAddress:127.0.0.1</span></div>
<div class="ll" style="top:65.0px;left:0.5px"><b><i>【</i> 2020-07-13 15:39:28 <i>】</i></b><span class="g"><i>正在连接约战服务器</i> [ 127.0.0.1:6004 ]</span></div>
<div class="ll" style="top:73.5px;left:0.5px"><b><i>【</i> 2020-07-13 15:39:28 <i>】</i></b><span class="g">OnEventTCPSocketLink -NETWORK_PERSONAL_ROOM_CORRESPOND</span></div>
<div class="ll" style="top:82.0px;left:0.5px"><b><i>【</i> 2020-07-13 15:39:28 <i>】</i></b><span class="t">——send SUB_CS_C_REGISTER_CLUB</span></div>
<div class="ll" style="top:90.5px;left:0.5px"><b><i>【</i> 2020-07-13 15:39:28 <i>】</i></b><span class="t"><i>约占服务器连接成功</i> SUB_CS_S_CLUB_RESULT</span></div>
<div class="ll" style="top:99.0px;left:0.5px"><b><i>【</i> 2020-07-13 15:39:28 <i>】</i></b><span class="t">-UI_PERSONAL_ROOM_RESULT</span></div>
<div class="ll" style="top:107.5px;left:0.5px"><b><i>【</i> 2020-07-13 15:39:28 <i>】</i></b><span class="g"><i>服务启动成功</i></span></div>
<div class="ll" style="top:116.0px;left:0.5px"><b><i>【</i> 2020-07-13 15:39:28 <i>】</i></b><span class="r"><i>俱乐部服务器启动成功</i>.:)</span></div>
<div class="ll" style="top:124.5px;left:0.5px"><b><i>【</i> 2020-07-13 15:39:28 <i>】</i></b><span class="g">OnDBLoadClubSubkind clubidd=2 ,subkindid count:2</span></div>
<div class="ll" style="top:133.0px;left:0.5px"><b><i>【</i> 2020-07-13 15:39:28 <i>】</i></b><span class="g">OnDBLoadClubSubkind clubidd=3 ,subkindid count:2</span></div>
<div class="ll" style="top:141.5px;left:0.5px"><b><i>【</i> 2020-07-13 15:39:28 <i>】</i></b><span class="g">OnDBLoadClubSubkind clubidd=4 ,subkindid count:2</span></div>
<div class="sb" style="left:276.0px;top:0px;width:9px;height:152px"><div class="thumb" style="left:0;top:28px;width:9px;height:63px"></div><svg style="left:2px;top:3px" width="5" height="3" viewBox="0 0 5 3"><path d="M0.500 2.700 L2.500 0.700 L4.500 2.700" stroke="#444" stroke-width=".8" fill="none"/></svg><svg style="left:2px;top:146px" width="5" height="3" viewBox="0 0 5 3"><path d="M0.500 0.300 L2.500 2.300 L4.500 0.300" stroke="#444" stroke-width=".8" fill="none"/></svg><div style="left:3px;top:57px;width:4px;height:1px;background:#555;box-shadow:0 1.500px 0 #555,0 3px 0 #555"></div></div>
</div>
<div class="btn dis " style="left:53px;top:167.0px;width:47px;height:13px;line-height:11px">启动服务</div>
<div class="btn " style="left:184px;top:167.0px;width:47px;height:13px;line-height:11px">停止服务</div>
</div></div>
<div class="win act" style="left:627.500px;top:354px;width:269.500px;height:195px">
<svg style="left:5px;top:3.500px" width="10" height="10" viewBox="0 0 11 11"><path d="M4 2.500 L10.500 1.500 L10 8 L4.500 9Z" fill="#4aa6f2" stroke="#cfd8e2" stroke-width=".7"/><circle cx="3" cy="4" r="2.500" fill="#dfe3e8" stroke="#9aa0a8" stroke-width=".5"/><path d="M2.500 6.500 L4 6.500 L5 10.500 L1.500 10.500Z" fill="#b9bfc6"/><path d="M5.500 9 L8.500 8.500 L9 10.500 L5 10.500Z" fill="#c9cfd6"/></svg>
<div class="title" style="left:0;top:3px;width:271px">[ 潮富喳宝 ] -- [ 潮富喳宝 ] -- [ 运行 ]</div>
<div class="cbtns" style="left:213px;top:0.500px;width:54px"><div style="left:0;width:14px"><div style="left:4px;top:6px;width:5px;height:2px;border:none;background:#000"></div></div><div style="left:14px;width:14px"><div style="left:4px;top:3px;width:6px;height:5px;border:1px solid #555;border-top-width:1.300px"></div></div><div style="left:28px;width:25px;background:#c84f4c;font-size:9px;font-weight:bold;line-height:8.500px;text-align:center;font-family:'Liberation Sans',sans-serif">x</div></div>
<div class="client" style="left:4px;top:17px;width:262px;height:173px">
<div style="left:4.500px;top:7px;width:253px;height:35px;border:1px solid #d0d0d0;box-shadow:inset 0.500px 0.500px 0 #fff"></div>
<div style="left:9px;top:3px;height:10px;line-height:10px;padding:0 1px;background:#f0f0f0;font-size:6.600px;white-space:nowrap">游戏服务信息:</div>
<div style="left:12px;top:15px;font-size:6.600px;line-height:10px;white-space:nowrap">游戏名字:</div>
<div style="left:50px;top:15px;width:62px;height:10px;border:1px solid #8a8a8a;border-right-color:#e3e3e3;border-bottom-color:#e3e3e3;font-size:6.400px;line-height:9px;padding-left:1px;white-space:nowrap">潮富喳宝</div>
<div style="left:121px;top:15px;font-size:6.600px;line-height:10px;white-space:nowrap">监听端口:</div>
<div style="left:157px;top:15px;width:56px;height:10px;border:1px solid #8a8a8a;border-right-color:#e3e3e3;border-bottom-color:#e3e3e3;font-size:6.400px;line-height:9px;padding-left:1px;white-space:nowrap">自动适配</div>
<div style="left:12px;top:28px;font-size:6.600px;line-height:10px;white-space:nowrap">房间名称:</div>
<div style="left:50px;top:28px;width:163px;height:10px;border:1px solid #8a8a8a;border-right-color:#e3e3e3;border-bottom-color:#e3e3e3;font-size:6.400px;line-height:9px;padding-left:1px;white-space:nowrap">潮富喳宝</div>
<div class="logbox" style="left:3.500px;top:46px;width:210px;height:126px">
<div class="ll" style="top:-3.5px;left:0.5px"><b><i>【</i> 2020-07-13 15:45:31 <i>】</i></b><span class="t">UI_SERVICE_CONFIG_RESULT=1</span></div>
<div class="ll" style="top:5.0px;left:0.5px"><b><i>【</i> 2020-07-13 15:45:31 <i>】</i></b><span class="t">msg=1</span></div>
<div class="ll" style="top:13.5px;left:0.5px"><b><i>【</i> 2020-07-13 15:45:31 <i>】</i></b><span class="t">ControlResult-&gt;cbSuccess=1</span></div>
<div class="ll" style="top:22.0px;left:0.5px"><b><i>【</i> 2020-07-13 15:45:31 <i>】</i></b><span class="t">msg=3</span></div>
<div class="ll" style="top:30.5px;left:0.5px"><b><i>【</i> 2020-07-13 15:45:31 <i>】</i></b><span class="t">msg=6</span></div>
<div class="ll" style="top:39.0px;left:0.5px"><b><i>【</i> 2020-07-13 15:45:31 <i>】</i></b><span class="g"><i>正在连接协调服务器</i> [ 127.0.0.1:6005 ]</span></div>
<div class="ll" style="top:47.5px;left:0.5px"><b><i>【</i> 2020-07-13 15:45:31 <i>】</i></b><span class="g"><i>正在连接约战服务器</i> [ 127.0.0.1:6004 ]</span></div>
<div class="ll" style="top:56.0px;left:0.5px"><b><i>【</i> 2020-07-13 15:45:31 <i>】</i></b><span class="g"><i>正在发送游戏房间注册信息</i>...</span></div>
<div class="ll" style="top:64.5px;left:0.5px"><b><i>【</i> 2020-07-13 15:45:31 <i>】</i></b><span class="g"><i>正在发送游戏房间注册信息</i>...</span></div>
<div class="ll" style="top:73.0px;left:0.5px"><b><i>【</i> 2020-07-13 15:45:31 <i>】</i></b><span class="t">DBR_GR_LOAD_CLUB_BEFOREROOM serverid=</span></div>
<div class="ll" style="top:81.5px;left:0.0px"><span class="t">10</span></div>
<div class="ll" style="top:90.0px;left:0.5px"><b><i>【</i> 2020-07-13 15:45:31 <i>】</i></b><span class="t">UI_CORRESPOND_RESULT=1</span></div>
<div class="ll" style="top:98.5px;left:0.5px"><b><i>【</i> 2020-07-13 15:45:31 <i>】</i></b><span class="g"><i>服务启动成功</i></span></div>
<div class="ll" style="top:107.0px;left:0.5px"><b><i>【</i> 2020-07-13 15:45:32 <i>】</i></b><span class="t">OnRequestLoadPersonalParameter =0</span></div>
<div class="sb" style="left:199.5px;top:0px;width:9px;height:124px"><div class="thumb" style="left:0;top:60px;width:9px;height:55px"></div><svg style="left:2px;top:3px" width="5" height="3" viewBox="0 0 5 3"><path d="M0.500 2.700 L2.500 0.700 L4.500 2.700" stroke="#444" stroke-width=".8" fill="none"/></svg><svg style="left:2px;top:118px" width="5" height="3" viewBox="0 0 5 3"><path d="M0.500 0.300 L2.500 2.300 L4.500 0.300" stroke="#444" stroke-width=".8" fill="none"/></svg><div style="left:3px;top:85px;width:4px;height:1px;background:#555;box-shadow:0 1.500px 0 #555,0 3px 0 #555"></div></div>
</div>
<div class="btn dis " style="left:220px;top:46.0px;width:38px;height:12px;line-height:10px">启动服务</div>
<div class="btn def" style="left:220px;top:60.4px;width:38px;height:12px;line-height:10px">停止服务</div>
<div class="btn dis " style="left:220px;top:74.8px;width:38px;height:12px;line-height:10px">加载房间</div>
<div class="btn dis " style="left:220px;top:89.2px;width:38px;height:12px;line-height:10px">加载比赛</div>
<div class="btn dis " style="left:220px;top:103.6px;width:38px;height:12px;line-height:10px">创建房间</div>
<div class="btn dis " style="left:220px;top:118.0px;width:38px;height:12px;line-height:10px">配置房间</div>
<div class="btn dis " style="left:220px;top:132.4px;width:38px;height:12px;line-height:10px">配置比赛</div>
<div class="btn " style="left:220px;top:146.8px;width:38px;height:12px;line-height:10px">运行参数</div>
<div class="btn " style="left:220px;top:161.2px;width:38px;height:12px;line-height:10px">服务控制</div>
</div></div>
<div id="taskbar" style="left:0;top:554.500px;width:1024px;height:22px;background:#67c8ea;border-top:1px solid #57aac9">
<svg style="left:6px;top:4px" width="15" height="14" viewBox="0 0 15 14"><path d="M0 2 L6.200 1.100 L6.200 6.600 L0 6.600Z M7 1 L15 0 L15 6.600 L7 6.600Z M0 7.400 L6.200 7.400 L6.200 12.900 L0 12Z M7 7.400 L15 7.400 L15 14 L7 13Z" fill="#fff"/></svg>
<svg style="left:34px;top:2px" width="18" height="18" viewBox="0 0 18 18"><rect x="1" y="1" width="6" height="14" fill="#2f86e0"/><rect x="2" y="3" width="4" height="1" fill="#cfe6ff"/><rect x="2" y="6" width="4" height="1" fill="#cfe6ff"/><rect x="4" y="10" width="13" height="7" rx="1" fill="#8fa3b5" stroke="#e8eef3" stroke-width=".6"/><rect x="8" y="8.500" width="5" height="2" fill="#6d8194"/></svg>
<svg style="left:67px;top:4px" width="16" height="14" viewBox="0 0 16 14"><path d="M3 0.500 L15.500 0.500 L13 13.500 L0.500 13.500Z" fill="#2b6fc4" stroke="#9cc4ee" stroke-width=".6"/><path d="M4.500 3.500 L8.500 7 L4 10.500" stroke="#fff" stroke-width="1.400" fill="none"/><path d="M8 10.500 L11.500 10.500" stroke="#fff" stroke-width="1.200"/></svg>
<div style="left:92px;top:0;width:74px;height:21px;background:#7bd1ed;border-left:1px solid #4a93b2;box-shadow:1px 0 0 #4a93b2,inset 0 -1px 0 #5c9ab5"></div>
<svg style="left:97px;top:3px" width="13" height="17" viewBox="0 0 13 17"><path d="M0.500 2 L6 0.500 L6 15.500 L0.500 13.500Z" fill="#f7e38c" stroke="#d9b64a" stroke-width=".4"/><path d="M2.500 1.800 L11 1 L11 13 L4 16.500Z" fill="#f1d263" stroke="#d2ab3e" stroke-width=".4"/><path d="M11 8 L12.300 7.600 L12.300 12.500 L11 13Z" fill="#c9c9c9"/></svg>
<div style="left:115px;top:0;height:21px;line-height:20px;font-size:6.900px;white-space:nowrap;color:#111">Server</div>
<div style="left:167px;top:0;width:74px;height:21px;background:#7bd1ed;border-left:1px solid #4a93b2;box-shadow:1px 0 0 #4a93b2,inset 0 -1px 0 #5c9ab5"></div>
<svg style="left:172px;top:3px" width="13" height="17" viewBox="0 0 13 17"><path d="M0.500 2 L6 0.500 L6 15.500 L0.500 13.500Z" fill="#f7e38c" stroke="#d9b64a" stroke-width=".4"/><path d="M2.500 1.800 L11 1 L11 13 L4 16.500Z" fill="#f1d263" stroke="#d2ab3e" stroke-width=".4"/><path d="M11 8 L12.300 7.600 L12.300 12.500 L11 13Z" fill="#c9c9c9"/></svg>
<div style="left:190px;top:0;height:21px;line-height:20px;font-size:6.900px;white-space:nowrap;color:#111">gamebin13</div>
<svg style="left:249px;top:2px" width="17" height="18" viewBox="0 0 17 18"><rect x="0.500" y="0.500" width="16" height="17" rx="3.500" fill="#fff"/><circle cx="5.800" cy="11" r="2.700" fill="none" stroke="#e8453c" stroke-width="1.400"/><circle cx="11.200" cy="11" r="2.700" fill="none" stroke="#2f8cf0" stroke-width="1.400"/><circle cx="8.500" cy="6.300" r="2.700" fill="none" stroke="#2f8cf0" stroke-width="1.400"/></svg>
<svg style="left:281px;top:2px" width="17" height="17" viewBox="0 0 26 26"><circle cx="13" cy="13" r="12.500" fill="#f6c51d"/><path d="M13 13 L2.200 6.800 A12.500 12.500 0 0 0 13 25.500 L18.500 16Z" fill="#37a84f"/><path d="M2.200 6.800 A12.500 12.500 0 0 1 23.800 6.800 L13 6.800 L7.500 16Z" fill="#e3412f"/><circle cx="13" cy="13" r="6" fill="#fff"/><circle cx="13" cy="13" r="4.700" fill="#2f7de8"/></svg>
<div style="left:306px;top:0;width:75px;height:21px;background:#7bd1ed;border-left:1px solid #4a93b2;box-shadow:1px 0 0 #4a93b2,inset 0 -1px 0 #5c9ab5"></div>
<svg style="left:312px;top:3px" width="16" height="17" viewBox="0 0 16 17"><path d="M1 3 L1 11 C1 13.500 8 13.500 8 11 L8 3Z" fill="#f3c93a"/><ellipse cx="4.500" cy="3" rx="3.500" ry="1.500" fill="#fbe58a"/><path d="M7 15 L14 6 M8 7 L14 15" stroke="#2f6fd0" stroke-width="1.600"/><path d="M10 1 L15 1 L15 5" stroke="#3aa848" stroke-width="1" fill="none"/><path d="M1 13 L1 16 L4 16" stroke="#3aa848" stroke-width="1" fill="none"/></svg>
<div style="left:330px;top:0;height:21px;line-height:20px;font-size:6.900px;white-space:nowrap;color:#111">Microsoft SQ...</div>
<div style="left:382px;top:0;width:75px;height:21px;background:#7bd1ed;border-left:1px solid #4a93b2;box-shadow:1px 0 0 #4a93b2,inset 0 -1px 0 #5c9ab5"></div>
<svg style="left:387px;top:2px" width="17" height="18" viewBox="0 0 17 18"><path d="M9 3 L15.500 2 L15.500 16 L9 17Z" fill="#b9bec4" stroke="#868d95" stroke-width=".5"/><path d="M7.500 3.500 L9 3 L9 17 L7.500 16Z" fill="#7d848c"/><circle cx="6" cy="7" r="5.300" fill="#2e86d9"/><path d="M2.500 4.500 C4.500 2.500 6.500 4 6 6 C5.500 8 8 8 7 10 C5.500 11.500 3 10.500 2 8.500Z" fill="#5cc04a"/><path d="M0.500 1.500 L6 0.500 L5 3 L8 3.500 L3.500 5Z" fill="#f3c52a"/></svg>
<div style="left:406px;top:0;height:21px;line-height:20px;font-size:6.900px;white-space:nowrap;color:#111">Internet Infor...</div>
<div style="left:458px;top:0;width:76px;height:21px;background:#7bd1ed;border-left:1px solid #4a93b2;box-shadow:1px 0 0 #4a93b2,inset 0 -1px 0 #5c9ab5"></div>
<svg style="left:463px;top:3px" width="18" height="15" viewBox="0 0 28 22"><path d="M9 8 C9 15 12.500 18.500 19 18.500" stroke="#2aa32a" stroke-width="6.500" fill="none"/><path d="M0.500 10 L9 0.500 L17.500 10Z" fill="#3cc02c"/><path d="M19 14 C19 7 15.500 3.500 9 3.500" stroke="#2fae26" stroke-width="6.500" fill="none"/><path d="M10.500 12 L19 21.500 L27.500 12Z" fill="#1f8f1f"/></svg>
<div style="left:482px;top:0;height:21px;line-height:20px;font-size:6.900px;white-space:nowrap;color:#111">协调服务器 -- ...</div>
<div style="left:534px;top:0;width:75px;height:21px;background:#7bd1ed;border-left:1px solid #4a93b2;box-shadow:1px 0 0 #4a93b2,inset 0 -1px 0 #5c9ab5"></div>
<svg style="left:540px;top:3px" width="17" height="16" viewBox="0 0 17 16"><path d="M1 3 L4 13 L8 3" stroke="#e8a21c" stroke-width="2.600" fill="none"/><path d="M15 3 L10 3 L9.500 8 L14 8 L13.500 13 L8.500 13" stroke="#d8421c" stroke-width="2.200" fill="none"/></svg>
<div style="left:558px;top:0;height:21px;line-height:20px;font-size:6.900px;white-space:nowrap;color:#111">约战服务器 -- ...</div>
<div style="left:610px;top:0;width:76px;height:21px;background:#7bd1ed;border-left:1px solid #4a93b2;box-shadow:1px 0 0 #4a93b2,inset 0 -1px 0 #5c9ab5"></div>
<svg style="left:615px;top:3px" width="17" height="17" viewBox="0 0 26 25"><path d="M11 13 L20 3 L24 1 L25 4 L22 5 L23 8 L20 8 L20 11 L17 11 L14 16Z" fill="#c4c8cc" stroke="#90959a" stroke-width=".5"/><circle cx="8" cy="17" r="5.500" fill="none" stroke="#f2bd18" stroke-width="3.200"/></svg>
<div style="left:635px;top:0;height:21px;line-height:20px;font-size:6.900px;white-space:nowrap;color:#111">登录服务器 -- ...</div>
<div style="left:686px;top:0;width:76px;height:21px;background:#7bd1ed;border-left:1px solid #4a93b2;box-shadow:1px 0 0 #4a93b2,inset 0 -1px 0 #5c9ab5"></div>
<svg style="left:691px;top:2px" width="18" height="18" viewBox="0 0 12 12"><path d="M6 0.500 L7.500 4.500 L11.500 4.800 L8.300 7.300 L9.500 11.300 L6 9 L2.500 11.300 L3.700 7.300 L0.500 4.800 L4.500 4.500Z" fill="#5a5af0"/></svg>
<div style="left:711px;top:0;height:21px;line-height:20px;font-size:6.900px;white-space:nowrap;color:#111">clubserver服...</div>
<div style="left:763px;top:0;width:76px;height:21px;background:#a9def2;border-left:1px solid #4a93b2;box-shadow:1px 0 0 #4a93b2,inset 0 -1px 0 #5c9ab5"></div>
<svg style="left:768px;top:2px" width="18" height="18" viewBox="0 0 28 27"><ellipse cx="17" cy="23" rx="7" ry="2.500" fill="#c9cfd6"/><path d="M14 17 L20 17 L21 23 L13 23Z" fill="#b4bbc3"/><path d="M11 6 L26 3 L25 18 L12 20Z" fill="#dbe3ec" stroke="#9aa5b0" stroke-width=".6"/><path d="M12.500 7.200 L24.600 4.800 L23.800 16.800 L13.300 18.400Z" fill="#4aa6f2"/><circle cx="7" cy="9" r="6" fill="#d9dde2" stroke="#9aa0a8" stroke-width=".6"/><path d="M6 15 L9 15 L11 24 L4 24Z" fill="#b9bfc6"/></svg>
<div style="left:788px;top:0;height:21px;line-height:20px;font-size:6.900px;white-space:nowrap;color:#111">[ 潮富喳宝 ] --...</div>
<div style="left:839px;top:0;width:74px;height:21px;background:#7bd1ed;border-left:1px solid #4a93b2;box-shadow:1px 0 0 #4a93b2,inset 0 -1px 0 #5c9ab5"></div>
<svg style="left:844px;top:2px" width="18" height="18" viewBox="0 0 28 27"><ellipse cx="17" cy="23" rx="7" ry="2.500" fill="#c9cfd6"/><path d="M14 17 L20 17 L21 23 L13 23Z" fill="#b4bbc3"/><path d="M11 6 L26 3 L25 18 L12 20Z" fill="#dbe3ec" stroke="#9aa5b0" stroke-width=".6"/><path d="M12.500 7.200 L24.600 4.800 L23.800 16.800 L13.300 18.400Z" fill="#4aa6f2"/><circle cx="7" cy="9" r="6" fill="#d9dde2" stroke="#9aa0a8" stroke-width=".6"/><path d="M6 15 L9 15 L11 24 L4 24Z" fill="#b9bfc6"/></svg>
<div style="left:863px;top:0;height:21px;line-height:20px;font-size:6.900px;white-space:nowrap;color:#111">[ 十三水 ] -- [ ...</div>
<svg style="left:918.500px;top:9px" width="4.500" height="3.500" viewBox="0 0 5 4"><path d="M0 3.500 L2.500 0.500 L5 3.500Z" fill="#222"/></svg>
<svg style="left:929.500px;top:6.500px" width="9.500" height="9.500" viewBox="0 0 11 11"><path d="M1.500 0.500 L1.500 10.500" stroke="#fff" stroke-width="1.200"/><path d="M2.500 1 L8.500 1 L8.500 6 L2.500 6Z" fill="#fff"/><circle cx="7.500" cy="7.500" r="2.800" fill="#d8392b"/></svg>
<svg style="left:943.500px;top:6px" width="9.500" height="9.500" viewBox="0 0 11 11" opacity=".85"><rect x="1" y="1" width="8" height="6" fill="none" stroke="#fff" stroke-width="1"/><path d="M3 10 L7 10 M5 7 L5 10" stroke="#fff" stroke-width="1"/><path d="M6 4 L10 4 L10 8 L6 8Z" fill="#6bc6e9" stroke="#fff" stroke-width=".8"/></svg>
<svg style="left:957px;top:6.500px" width="9.500" height="9.500" viewBox="0 0 11 11" opacity=".9"><path d="M0.500 3.500 L2.500 3.500 L5.500 1 L5.500 10 L2.500 7.500 L0.500 7.500Z" fill="#fff"/><circle cx="7.800" cy="7.300" r="2.800" fill="#d8392b"/></svg>
<div style="left:970.500px;top:0.500px;height:21px;line-height:20px;font-size:7.800px;color:#f2f8fb;opacity:.9">英</div>
<div style="left:981px;top:0.300px;width:40px;text-align:center;font-size:7.200px;line-height:9.800px;color:#111;white-space:nowrap">15:46<br>2020/7/13</div>
</div>
</div>
</body></html>
